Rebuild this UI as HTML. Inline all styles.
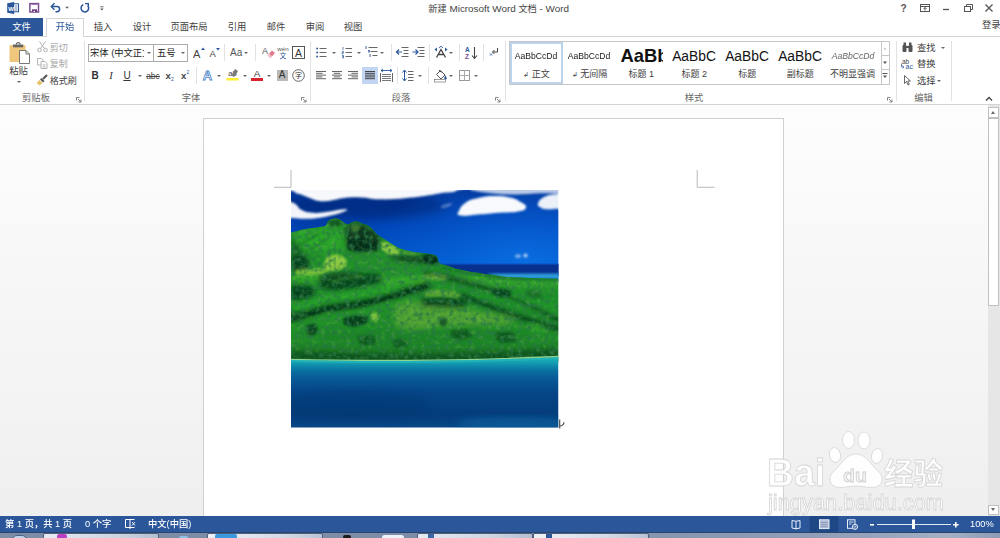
<!DOCTYPE html>
<html lang="zh-CN">
<head>
<meta charset="utf-8">
<title>新建 Microsoft Word 文档 - Word</title>
<style>
html,body{margin:0;padding:0;}
body{width:1000px;height:538px;overflow:hidden;position:relative;background:#fff;
 font-family:"Liberation Sans","Noto Sans CJK SC",sans-serif;font-size:9.300px;color:#404040;}
.a{position:absolute;white-space:nowrap;line-height:1;}
.t{position:absolute;white-space:nowrap;line-height:12px;height:12px;}
.c{text-align:center;}
svg{position:absolute;overflow:visible;}
#titlebar{left:0;top:0;width:1000px;height:18px;background:#fff;}
#tabs{left:0;top:18px;width:1000px;height:18px;background:#fff;}
#ribbon{left:0;top:36px;width:1000px;height:69px;background:#fff;border-top:1px solid #d4d4d4;border-bottom:1px solid #d4d4d4;box-sizing:border-box;}
#rc{left:0;top:0;width:1000px;height:105px;}
#doc{left:0;top:105px;width:1000px;height:411px;background:linear-gradient(to bottom,#fdfdfd 0%,#efefef 100%);}
#page{left:203px;top:117.500px;width:581px;height:398.500px;background:#fff;border:1px solid #d0d0d0;border-bottom:none;box-sizing:border-box;}
#status{left:0;top:516px;width:1000px;height:16px;background:#2b579a;color:#fff;font-weight:500;}
#taskbar{left:0;top:532px;width:1000px;height:6px;background:#7d8da8;overflow:hidden;}
.sep{position:absolute;width:1px;background:#e1e1e1;}
.gl{color:#666;}
.dis{color:#a6a6a6;}
.dd{position:absolute;width:0;height:0;border-left:2px solid transparent;border-right:2px solid transparent;border-top:2.500px solid #666;}
</style>
</head>
<body>
<div class="a" id="titlebar">
<svg style="left:0;top:0" width="120" height="18" viewBox="0 0 120 18">
<rect x="12.500" y="3.800" width="6" height="8" fill="#fff" stroke="#2b579a" stroke-width="1"/>
<path d="M15 6h2.500M15 8h2.500M15 10h2.500" stroke="#2b579a" stroke-width="0.700"/>
<path d="M7.200 3.200l7-1.200v12l-7-1.200z" fill="#2b579a"/>
<text x="8.300" y="10.500" font-size="6" font-weight="bold" fill="#fff" font-family="Liberation Sans, sans-serif">W</text>
<rect x="29.900" y="3.600" width="8.600" height="8.400" fill="#fff" stroke="#7d4c92" stroke-width="1.500"/>
<rect x="31.500" y="3.600" width="5.500" height="1" fill="#7d4c92"/>
<rect x="32" y="9.300" width="5" height="2.700" fill="#6a3a80"/><rect x="33.500" y="10.800" width="1.500" height="1.200" fill="#fff"/>
<path d="M52 6.500h5a2.600 2.600 0 0 1 0 5.200h-1.500" fill="none" stroke="#2b579a" stroke-width="1.500"/><path d="M54.500 3.300l-3.200 3.200 3.200 3.200" fill="none" stroke="#2b579a" stroke-width="1.500"/>
<path d="M65.300 6.800h3.600l-1.800 1.900z" fill="#555"/>
<path d="M83.300 4.600a3.800 3.800 0 1 0 4.600 1.200" fill="none" stroke="#2b579a" stroke-width="1.500"/><path d="M85 3.600h3.300v3.300" fill="none" stroke="#2b579a" stroke-width="1.400"/>
<path d="M100.300 6.800h3.200" stroke="#555" stroke-width="0.900"/><path d="M100.200 8.600h3.400l-1.700 1.900z" fill="#555"/>
</svg>
<div class="t c" style="left:398.700px;top:3px;width:200px;font-size:9.900px;color:#444;"><span style="font-size:9.200px">新建</span> Microsoft Word <span style="font-size:9.200px">文档</span> - Word</div>
<div class="t c" style="left:896.500px;top:3px;width:14px;font-size:10px;font-weight:bold;color:#555;">?</div>
<svg style="left:915px;top:0" width="85" height="18" viewBox="0 0 85 18" fill="none" stroke="#555" stroke-width="1">
<rect x="5.500" y="4.500" width="9" height="7"/><path d="M5.500 6.500h9M10 10.500v-3M8.500 9l1.500-1.500L11.500 9"/>
<path d="M28 9.500h6" stroke-width="1.300"/>
<rect x="49.500" y="6.500" width="6" height="5"/><path d="M51.500 6.500v-2h6v5h-2"/>
<path d="M70.500 4.500l7 7M77.500 4.500l-7 7" stroke-width="1.300"/>
</svg>
</div>
<div class="a" id="tabs">
<div class="a" style="left:0;top:0;width:43px;height:18px;background:#2b579a;"></div>
<div class="t c" style="left:0;top:3px;width:43px;color:#fff;">文件</div>
<div class="a" style="left:46px;top:0;width:38px;height:19px;background:#fff;border:1px solid #d4d4d4;border-bottom:none;box-sizing:border-box;z-index:3;"></div>
<div class="t c" style="left:46px;top:3px;width:38px;color:#2b579a;z-index:4;">开始</div>
<div class="t c" style="left:84px;top:3px;width:38px;">插入</div>
<div class="t c" style="left:123px;top:3px;width:38px;">设计</div>
<div class="t c" style="left:162px;top:3px;width:54px;">页面布局</div>
<div class="t c" style="left:218px;top:3px;width:38px;">引用</div>
<div class="t c" style="left:257px;top:3px;width:38px;">邮件</div>
<div class="t c" style="left:296px;top:3px;width:38px;">审阅</div>
<div class="t c" style="left:334px;top:3px;width:38px;">视图</div>
<div class="t" style="left:982px;top:1px;">登录</div>
</div>
<div class="a" id="ribbon"></div>
<div class="a" id="rc"><svg style="left:8px;top:40px" width="24" height="26" viewBox="0 0 24 26" >
<rect x="1.500" y="5" width="16" height="17" rx="1" fill="#eec67c"/>
<rect x="5" y="4.500" width="10.200" height="2.800" fill="#666"/><path d="M8.300 4.500a1.900 1.900 0 0 1 3.800 0" fill="none" stroke="#666" stroke-width="1.200"/>
<path d="M11.500 10.500h6.500l3.500 3.500v9.500h-10z" fill="#fff" stroke="#777" stroke-width="1"/><path d="M18 10.500v3.500h3.500" fill="none" stroke="#777" stroke-width="1"/>
</svg>
<div class="t c" style="top:65px;left:3.5px;width:30px;">粘贴</div>
<div class="dd" style="left:17px;top:81px;"></div>
<svg style="left:37px;top:41px" width="11" height="12" viewBox="0 0 11 12" fill="none" stroke="#b0b0b0" stroke-width="1"><path d="M2.500 0.500l5 7M8.500 0.500l-5 7"/><circle cx="2.500" cy="9" r="1.800"/><circle cx="8.500" cy="9" r="1.800"/></svg>
<div class="t dis" style="top:41.5px;left:49.8px;font-size:9px;">剪切</div>
<svg style="left:36.5px;top:58px" width="11" height="11" viewBox="0 0 11 11" fill="none" stroke="#b5b5b5" stroke-width="1"><path d="M0.500 0.500h4l1.500 1.500v5h-5.500z" fill="#fff"/><path d="M4 3.500h4l2 2v5h-6z" fill="#fff"/><path d="M5.500 7h3M5.500 9h3" /></svg>
<div class="t dis" style="top:58px;left:49.8px;font-size:9px;">复制</div>
<svg style="left:36px;top:74px" width="12" height="12" viewBox="0 0 12 12" ><path d="M11 1l-4 4" stroke="#555" stroke-width="2.200"/><path d="M5.500 4l3 3-1.500 1.500-3-3z" fill="#555"/><path d="M3.500 6l3 3-3 2.500-3-2.500z" fill="#e9c36e"/></svg>
<div class="t " style="top:74.5px;left:49.8px;font-size:9px;">格式刷</div>
<div class="t gl c" style="top:91.5px;left:16px;width:40px;">剪贴板</div>
<svg style="left:76px;top:96.5px" width="5.5" height="5.5" viewBox="0 0 5.5 5.5" fill="none" stroke="#777" stroke-width="0.900"><path d="M0.500 3.500v-3h3" /><path d="M2 2l3 3M5 2.500v2.500h-2.500" /></svg>
<div class="sep" style="left:84px;top:41px;height:60px;"></div>
<div class="a" style="left:88px;top:44px;width:66px;height:18px;border:1px solid #ababab;box-sizing:border-box;background:#fff;"></div>
<div class="a" style="left:154px;top:44px;width:34px;height:18px;border:1px solid #ababab;border-left:none;box-sizing:border-box;background:#fff;"></div>
<div class="t " style="top:47px;left:90px;width:54px;overflow:hidden;color:#222;">宋体 (中文正文)</div>
<div class="dd" style="left:147px;top:52px;"></div>
<div class="t " style="top:47px;left:157px;color:#222;">五号</div>
<div class="dd" style="left:181px;top:52px;"></div>
<div class="t " style="top:47.5px;left:193px;font-size:11px;color:#444;">A</div>
<svg style="left:200.5px;top:47px" width="4" height="3" viewBox="0 0 4 3" ><path d="M0 3l2-2.500 2 2.500z" fill="#2b579a"/></svg>
<div class="t " style="top:48px;left:209.5px;font-size:9.500px;color:#444;">A</div>
<svg style="left:215.5px;top:47.5px" width="4" height="3" viewBox="0 0 4 3" ><path d="M0 0l2 2.500 2-2.500z" fill="#2b579a"/></svg>
<div class="t " style="top:47px;left:230px;font-size:10px;color:#555;">Aa</div>
<div class="dd" style="left:244px;top:52px;"></div>
<div class="sep" style="left:224px;top:44px;height:17px;"></div>
<div class="sep" style="left:254.5px;top:44px;height:17px;"></div>
<svg style="left:262px;top:46px" width="13" height="13" viewBox="0 0 13 13" ><text x="0" y="8" font-size="9" fill="#555" font-family="Liberation Sans, sans-serif">A</text><path d="M5.500 9.500l4.500-5 3 2.500-4.500 5z" fill="#e07a8a"/><path d="M5.500 9.500l1.500-1.700 3 2.500-1.500 1.700z" fill="#f3c5cc"/></svg>
<div class="t c" style="top:42.5px;left:273px;width:20px;font-size:6.200px;color:#555;">wén</div>
<div class="t c" style="top:49.8px;left:273px;width:20px;font-size:6.800px;color:#2b579a;">文</div>
<svg style="left:291.5px;top:45.5px" width="13" height="13" viewBox="0 0 13 13" ><rect x="0.500" y="0.500" width="12" height="12" fill="#fff" stroke="#555"/><text x="6.500" y="10.500" font-size="10.500" text-anchor="middle" fill="#333" font-family="Liberation Sans, sans-serif">A</text></svg>
<div class="t c" style="top:69.5px;left:89px;width:12px;font-weight:bold;font-size:10px;color:#333;">B</div>
<div class="t c" style="top:69.5px;left:105px;width:12px;font-style:italic;font-size:10.500px;color:#333;font-family:'Liberation Serif',serif;">I</div>
<div class="t c" style="top:69.5px;left:121px;width:12px;text-decoration:underline;font-size:10px;color:#333;">U</div>
<div class="dd" style="left:137.5px;top:75px;"></div>
<div class="t c" style="top:70px;left:144px;width:18px;text-decoration:line-through;font-size:8.500px;color:#444;">abc</div>
<div class="t " style="top:70px;left:165.5px;font-weight:bold;font-size:9.500px;color:#444;">x</div>
<div class="t " style="top:73px;left:171px;font-size:5px;color:#2b579a;">2</div>
<div class="t " style="top:70px;left:181px;font-weight:bold;font-size:9.500px;color:#444;">x</div>
<div class="t " style="top:66px;left:186.5px;font-size:5px;color:#2b579a;">2</div>
<div class="sep" style="left:196px;top:67px;height:17px;"></div>
<svg style="left:201px;top:68px" width="14" height="14" viewBox="0 0 14 14" ><text x="6.500" y="12" font-size="13" font-weight="bold" text-anchor="middle" fill="#fff" stroke="#4a86c8" stroke-width="0.800" font-family="Liberation Sans, sans-serif">A</text></svg>
<div class="dd" style="left:217px;top:75px;"></div>
<div class="t c" style="top:67.5px;left:225.5px;width:14px;font-size:7.500px;color:#444;">ab</div>
<svg style="left:226px;top:68px" width="14" height="14" viewBox="0 0 14 14" ><path d="M9 1l3 2-4 6-2.500-1.500z" fill="#777"/><rect x="0.500" y="10" width="12" height="2.500" fill="#ffee33"/></svg>
<div class="dd" style="left:242.5px;top:75px;"></div>
<div class="t c" style="top:67.5px;left:250px;width:14px;font-size:9.800px;color:#444;">A</div>
<div class="a" style="left:251px;top:78px;width:12px;height:2.700px;background:#d8232a;"></div>
<div class="dd" style="left:267px;top:75px;"></div>
<div class="a" style="left:276.500px;top:69.500px;width:11px;height:11px;background:#b9b9b9;"></div>
<div class="t c" style="top:69.3px;left:275px;width:14px;font-size:10px;color:#333;">A</div>
<svg style="left:291.5px;top:69px" width="13" height="13" viewBox="0 0 13 13" ><circle cx="6.500" cy="6.500" r="5.800" fill="#fff" stroke="#555" stroke-width="0.900"/><text x="6.500" y="8.900" font-size="7" text-anchor="middle" fill="#333" font-family="Liberation Sans, Noto Sans CJK SC, sans-serif">字</text></svg>
<div class="t gl c" style="top:91.5px;left:171px;width:40px;">字体</div>
<svg style="left:300.5px;top:96.5px" width="5.5" height="5.5" viewBox="0 0 5.5 5.5" fill="none" stroke="#777" stroke-width="0.900"><path d="M0.500 3.500v-3h3" /><path d="M2 2l3 3M5 2.500v2.500h-2.500" /></svg>
<div class="sep" style="left:309.5px;top:41px;height:60px;"></div>
<svg style="left:316px;top:46px" width="13" height="13" viewBox="0 0 13 13" ><path d="M3.500 2.500h7M3.500 6.500h7M3.500 10.500h7" stroke="#666" stroke-width="1"/><rect x="0.300" y="1.700" width="1.700" height="1.700" fill="#2b579a"/><rect x="0.300" y="5.700" width="1.700" height="1.700" fill="#2b579a"/><rect x="0.300" y="9.700" width="1.700" height="1.700" fill="#2b579a"/></svg>
<div class="dd" style="left:332px;top:52px;"></div>
<svg style="left:342px;top:46px" width="13" height="13" viewBox="0 0 13 13" ><path d="M3.500 2.500h6.500M3.500 6.500h6.500M3.500 10.500h6.500" stroke="#666" stroke-width="1"/><path d="M1 1v3M0 5.500h1.500v1.200h-1.500v1.200h1.500M0 9.500h1.500v1.200h-1v0h1v1.200h-1.500" stroke="#2b579a" stroke-width="0.700" fill="none"/></svg>
<div class="dd" style="left:357px;top:52px;"></div>
<svg style="left:365px;top:46px" width="14" height="13" viewBox="0 0 14 13" ><path d="M3.500 1.500h9M5.500 5.500h7M7.500 9.500h5" stroke="#666" stroke-width="1"/><path d="M1 0v3M3 4.500h1.500v1.500h-1.500M5 8v3" stroke="#2b579a" stroke-width="0.900" fill="none"/></svg>
<div class="dd" style="left:379.5px;top:52px;"></div>
<div class="sep" style="left:391px;top:44px;height:17px;"></div>
<svg style="left:396px;top:46px" width="13" height="13" viewBox="0 0 13 13" ><path d="M5.500 1.500h7M7.500 4.500h5M7.500 7.500h5M5.500 10.500h7" stroke="#666" stroke-width="1"/><path d="M0.500 6h5.500M3 3.500l-2.500 2.500 2.500 2.500" stroke="#2b579a" stroke-width="1.200" fill="none"/></svg>
<svg style="left:412px;top:46px" width="13" height="13" viewBox="0 0 13 13" ><path d="M5.500 1.500h7M7.500 4.500h5M7.500 7.500h5M5.500 10.500h7" stroke="#666" stroke-width="1"/><path d="M0.500 6h5.500M3.500 3.500l2.500 2.500-2.500 2.500" stroke="#2b579a" stroke-width="1.200" fill="none"/></svg>
<div class="sep" style="left:429px;top:44px;height:17px;"></div>
<svg style="left:434px;top:46px" width="14" height="13" viewBox="0 0 14 13" ><path d="M2.500 11.500l4.500-8 4.500 8M4.500 8.500h5" stroke="#444" stroke-width="1.300" fill="none"/><path d="M0.500 3.500l2.500-2 0 4zM13.500 3.500l-2.500-2 0 4z" fill="#2b579a"/><path d="M5 2l2 -1.800 2 1.800" stroke="#2b579a" stroke-width="0.900" fill="none"/></svg>
<div class="dd" style="left:449px;top:52px;"></div>
<div class="sep" style="left:459px;top:44px;height:17px;"></div>
<svg style="left:465px;top:45.5px" width="14" height="14" viewBox="0 0 14 14" ><text x="0" y="6" font-size="6.500" font-weight="bold" fill="#2b579a" font-family="Liberation Sans, sans-serif">A</text><text x="0" y="13" font-size="6.500" font-weight="bold" fill="#7d4c92" font-family="Liberation Sans, sans-serif">Z</text><path d="M9.500 1v11M7 9.500l2.500 3 2.500-3" stroke="#444" stroke-width="1.100" fill="none"/></svg>
<div class="sep" style="left:482.5px;top:44px;height:17px;"></div>
<svg style="left:489px;top:47px" width="10" height="10" viewBox="0 0 10 10" ><path d="M8.500 1v4h-5M5.500 3l-2 2 2 2" stroke="#444" stroke-width="1" fill="none"/><path d="M1 6.500l2 2M3 6.500l-2 2" stroke="#2b579a" stroke-width="0.800"/></svg>
<svg style="left:316px;top:70px" width="12" height="12" viewBox="0 0 12 12" ><path d="M0 1.5h10M0 3.3h6.5M0 5.1h10M0 6.9h6.5M0 8.7h10" stroke="#666" stroke-width="1" fill="none"/></svg>
<svg style="left:332px;top:70px" width="12" height="12" viewBox="0 0 12 12" ><path d="M0 1.5h10M1.8 3.3h6.5M0 5.1h10M1.8 6.9h6.5M0 8.7h10" stroke="#666" stroke-width="1" fill="none"/></svg>
<svg style="left:348px;top:70px" width="12" height="12" viewBox="0 0 12 12" ><path d="M0 1.5h10M3.5 3.3h6.5M0 5.1h10M3.5 6.9h6.5M0 8.7h10" stroke="#666" stroke-width="1" fill="none"/></svg>
<div class="a" style="left:361.8px;top:67px;width:16px;height:17px;background:#c2d5f2;"></div>
<svg style="left:364.8px;top:70px" width="12" height="12" viewBox="0 0 12 12" ><path d="M0 1.5h10M0 3.3h10M0 5.1h10M0 6.9h10M0 8.7h10" stroke="#444" stroke-width="1" fill="none"/></svg>
<svg style="left:380px;top:69px" width="13" height="13" viewBox="0 0 13 13" ><path d="M0.500 4v9M12.500 4v9" stroke="#666"/><path d="M2 5.500h9M2 7.500h9M2 9.500h9M2 11.500h9" stroke="#777" stroke-width="1.200"/><path d="M1 1.500h11M3 0l-2 1.500 2 1.500M10 0l2 1.500-2 1.500" stroke="#2b579a" stroke-width="0.900" fill="none"/></svg>
<div class="sep" style="left:397px;top:67px;height:17px;"></div>
<svg style="left:402px;top:69px" width="14" height="13" viewBox="0 0 14 13" ><path d="M6 2.500h5.500M6 5.500h5.500M6 8.500h5.500M6 11.500h5.500" stroke="#666" stroke-width="1"/><path d="M2.500 1v11M0.500 3.500l2-2.500 2 2.500M0.500 9.500l2 2.500 2-2.500" stroke="#2b579a" stroke-width="1" fill="none"/></svg>
<div class="dd" style="left:418px;top:75px;"></div>
<div class="sep" style="left:428px;top:67px;height:17px;"></div>
<svg style="left:433px;top:68px" width="15" height="15" viewBox="0 0 15 15" ><path d="M3.500 6.500l4-4 4.500 4.500-4 4z" fill="#fff" stroke="#555" stroke-width="1"/><path d="M6 2l2.500 2.500" stroke="#555"/><path d="M12 7c1 1.500 1.800 2.500 1.800 3.300a1.300 1.300 0 0 1-2.600 0c0-.8.800-1.800.8-3.300z" fill="#2b579a"/><rect x="1.500" y="11.500" width="11" height="2.500" fill="#fff" stroke="#888" stroke-width="0.800"/></svg>
<div class="dd" style="left:449px;top:75px;"></div>
<svg style="left:458.5px;top:69.5px" width="11" height="11" viewBox="0 0 11 11" ><rect x="0.500" y="0.500" width="10" height="10" fill="none" stroke="#999"/><path d="M5.500 0.500v10M0.500 5.500h10" stroke="#aaa"/></svg>
<div class="dd" style="left:473.5px;top:75px;"></div>
<div class="t gl c" style="top:91.5px;left:381px;width:40px;">段落</div>
<svg style="left:495px;top:96.5px" width="5.5" height="5.5" viewBox="0 0 5.5 5.5" fill="none" stroke="#777" stroke-width="0.900"><path d="M0.500 3.500v-3h3" /><path d="M2 2l3 3M5 2.500v2.500h-2.500" /></svg>
<div class="sep" style="left:504.5px;top:41px;height:60px;"></div>
<div class="a" style="left:509px;top:41px;width:381px;height:44px;border:1px solid #c6c6c6;box-sizing:border-box;background:#fff;"></div>
<div class="a" style="left:510px;top:42px;width:53px;height:42px;border:2px solid #bcd3ee;box-sizing:border-box;background:#fff;"></div>
<div class="t c" style="top:50.3px;left:510.3px;width:52px;font-size:9.600px;color:#222;transform:scaleX(0.900);font-family:'Liberation Sans',sans-serif;">AaBbCcDd</div>
<div class="t c" style="top:50.3px;left:563px;width:52px;font-size:9.600px;color:#222;transform:scaleX(0.900);font-family:'Liberation Sans',sans-serif;">AaBbCcDd</div>
<div class="t " style="top:49px;left:620.5px;font-size:18.400px;font-weight:bold;color:#111;width:42.500px;overflow:hidden;line-height:22px;height:22px;top:44.800px;font-family:'Liberation Sans',sans-serif;">AaBb</div>
<div class="t c" style="top:50.5px;left:668px;width:52px;font-size:13.800px;color:#111;line-height:16px;height:16px;top:49.300px;font-family:'Liberation Sans',sans-serif;">AaBbC</div>
<div class="t c" style="top:50.5px;left:721px;width:52px;font-size:13.800px;color:#111;line-height:16px;height:16px;top:49.300px;font-family:'Liberation Sans',sans-serif;">AaBbC</div>
<div class="t c" style="top:50.5px;left:774px;width:52px;font-size:13.800px;color:#111;line-height:16px;height:16px;top:49.300px;font-family:'Liberation Sans',sans-serif;">AaBbC</div>
<div class="t c" style="top:50.3px;left:826.5px;width:52px;font-size:9.600px;font-style:italic;color:#666;transform:scaleX(0.900);font-family:'Liberation Sans',sans-serif;">AaBbCcDd</div>
<div class="t c" style="top:68px;left:510.5px;width:52px;font-size:9px;"><span style="font-size:7px">↲</span> 正文</div>
<div class="t c" style="top:68px;left:563.5px;width:52px;font-size:9px;"><span style="font-size:7px">↲</span> 无间隔</div>
<div class="t c" style="top:68px;left:615.3px;width:52px;font-size:9px;">标题 1</div>
<div class="t c" style="top:68px;left:668.3px;width:52px;font-size:9px;">标题 2</div>
<div class="t c" style="top:68px;left:721.3px;width:52px;font-size:9px;">标题</div>
<div class="t c" style="top:68px;left:774.3px;width:52px;font-size:9px;">副标题</div>
<div class="t c" style="top:68px;left:824.5px;width:56px;font-size:9px;">不明显强调</div>
<div class="a" style="left:880.500px;top:41px;width:9.500px;height:44px;border:1px solid #c6c6c6;box-sizing:border-box;background:#fff;"></div>
<div class="a" style="left:880.500px;top:55px;width:9.500px;height:1px;background:#c6c6c6;"></div>
<div class="a" style="left:880.500px;top:69px;width:9.500px;height:1px;background:#c6c6c6;"></div>
<svg style="left:880.3px;top:41px" width="10" height="44" viewBox="0 0 10 44" ><path d="M3.500 8.500l1.500-2 1.500 2z" fill="#bbb"/><path d="M3 20.500l2 2.500 2-2.500z" fill="#555"/><path d="M2.500 32.500h5" stroke="#555"/><path d="M3 34.500l2 2.500 2-2.500z" fill="#555"/></svg>
<div class="t gl c" style="top:91.5px;left:674px;width:40px;">样式</div>
<svg style="left:887px;top:96.5px" width="5.5" height="5.5" viewBox="0 0 5.5 5.5" fill="none" stroke="#777" stroke-width="0.900"><path d="M0.500 3.500v-3h3" /><path d="M2 2l3 3M5 2.500v2.500h-2.500" /></svg>
<div class="sep" style="left:896px;top:41px;height:60px;"></div>
<svg style="left:902px;top:42px" width="11" height="11" viewBox="0 0 11 11" ><rect x="0.500" y="3" width="4" height="7" rx="1" fill="#555"/><rect x="6.500" y="3" width="4" height="7" rx="1" fill="#555"/><rect x="1.500" y="0.500" width="2.500" height="3" fill="#555"/><rect x="7" y="0.500" width="2.500" height="3" fill="#555"/><rect x="4" y="4" width="3" height="2" fill="#555"/></svg>
<div class="t " style="top:41.5px;left:917px;">查找</div>
<div class="dd" style="left:940.5px;top:46.5px;"></div>
<div class="t " style="top:55.5px;left:902px;font-size:6.500px;color:#444;">ab</div>
<div class="t " style="top:61px;left:905.5px;font-size:7px;color:#2b579a;">ac</div>
<svg style="left:901px;top:63px" width="5" height="6" viewBox="0 0 5 6" ><path d="M0.500 0.500v3.500h2M1.500 2.500l1.500 1.500-1.500 1.500" stroke="#2b579a" stroke-width="0.700" fill="none"/></svg>
<div class="t " style="top:58px;left:917px;">替换</div>
<svg style="left:904px;top:75px" width="8" height="11" viewBox="0 0 8 11" ><path d="M0.500 0.500v8l2-2 1.500 3.500 1.300-.6-1.500-3.400h2.700z" fill="#fff" stroke="#555" stroke-width="0.900"/></svg>
<div class="t " style="top:74.5px;left:917px;">选择</div>
<div class="dd" style="left:936.5px;top:79.5px;"></div>
<div class="t gl c" style="top:91.5px;left:903.5px;width:40px;">编辑</div>
<div class="sep" style="left:951px;top:41px;height:60px;"></div>
<svg style="left:985.3px;top:95.7px" width="8" height="6" viewBox="0 0 8 6" ><path d="M1 4.500l3-3 3 3" stroke="#444" stroke-width="1.400" fill="none"/></svg></div>
<div class="a" id="doc"></div>
<div class="a" id="page"></div>
<svg style="left:291px;top:190px" width="267.500" height="237.500" viewBox="0 0 267.500 237.500">
<defs>
<linearGradient id="sky" x1="0" y1="0" x2="0" y2="1"><stop offset="0" stop-color="#04389c"/><stop offset="0.400" stop-color="#0046b8"/><stop offset="1" stop-color="#0062d6"/></linearGradient>
<linearGradient id="sea" gradientUnits="userSpaceOnUse" x1="0" y1="167" x2="0" y2="237.500"><stop offset="0" stop-color="#19b0b4"/><stop offset="0.070" stop-color="#14a2b2"/><stop offset="0.130" stop-color="#0e88aa"/><stop offset="0.200" stop-color="#0a6ea0"/><stop offset="0.300" stop-color="#085a96"/><stop offset="0.500" stop-color="#064688"/><stop offset="0.820" stop-color="#053c7a"/><stop offset="1" stop-color="#084886"/></linearGradient>
<radialGradient id="skyr" gradientUnits="userSpaceOnUse" cx="235" cy="70" r="170" gradientTransform="translate(0 35) scale(1 0.500)"><stop offset="0" stop-color="#0c74e8" stop-opacity="0.750"/><stop offset="0.450" stop-color="#0a6ae0" stop-opacity="0.450"/><stop offset="1" stop-color="#0a60d8" stop-opacity="0"/></radialGradient>
<linearGradient id="mg" x1="0" y1="0" x2="0" y2="1"><stop offset="0" stop-color="#249228"/><stop offset="0.400" stop-color="#1e9028"/><stop offset="0.850" stop-color="#1f8c26"/><stop offset="1" stop-color="#176a22"/></linearGradient>
<filter id="b1" x="-20%" y="-20%" width="140%" height="140%"><feGaussianBlur stdDeviation="1.200"/></filter>
<filter id="b2" x="-20%" y="-20%" width="140%" height="140%"><feGaussianBlur stdDeviation="2.500"/></filter>
<filter id="b4" x="-20%" y="-20%" width="140%" height="140%"><feGaussianBlur stdDeviation="4.500"/></filter>
<filter id="tex" x="0" y="0" width="100%" height="100%"><feTurbulence type="fractalNoise" baseFrequency="0.220" numOctaves="2" seed="7" result="n"/><feColorMatrix in="n" type="matrix" values="0 0 0 0 0.020  0 0 0 0 0.180  0 0 0 0 0.060  0 2.200 0 0 -0.950"/></filter>
<filter id="tex2" x="0" y="0" width="100%" height="100%"><feTurbulence type="fractalNoise" baseFrequency="0.200" numOctaves="2" seed="23" result="n"/><feColorMatrix in="n" type="matrix" values="0 0 0 0 0.550  0 0 0 0 0.850  0 0 0 0 0.200  0 1.800 0 0 -0.950"/></filter>
<clipPath id="cm"><path d="M0 42.7 L8 40.5 L16 38.7 L26 37.5 L34.7 36 L36.5 32 L39 29.5 L44 28.3 L48 29 L50.7 30.7 L54 33.5 L57.4 34.5 L60.5 32.5 L64 31.3 L68 32 L70.8 33.4 L76 35 L80 37.4 L83 41 L85.4 44 L90 47 L96 50.7 L101 54 L106.8 57.4 L114 60 L122.8 62 L131 63 L138.9 64 L144 65 L146.5 67 L147.4 72 L150 74 L157.5 76 L164 78.5 L171 80 L179 81.8 L187 82.8 L195 84.2 L203 85 L213.6 86.8 L240 88 L267.5 88.8 L267.5 172 L0 172Z"/></clipPath>
<clipPath id="ca"><rect x="0" y="0" width="267.500" height="237.500"/></clipPath>
</defs>
<g clip-path="url(#ca)">
<rect width="267.500" height="92" fill="url(#sky)"/>
<!-- sky tone variation -->
<ellipse cx="70" cy="16" rx="85" ry="13" fill="#062a80" opacity="0.800" filter="url(#b4)"/>
<ellipse cx="40" cy="36" rx="40" ry="8" fill="#04389c" opacity="0.500" filter="url(#b4)"/>
<rect width="267.500" height="92" fill="url(#skyr)"/>
<!-- clouds -->
<g filter="url(#b1)" fill="#fff">
<path d="M4.0 -6.0C-36.5 -4.0 2.3 -0.6 4.0 2.1C5.7 4.8 7.0 3.3 10.7 4.8C14.4 6.3 14.7 6.5 18.7 8.0C22.7 9.5 22.7 9.9 26.7 10.7C30.7 11.5 30.7 11.4 34.7 11.2C38.7 11.0 38.0 10.9 42.7 10.1C47.4 9.3 46.7 8.7 53.4 8.0C60.1 7.3 60.7 7.2 69.4 7.5C78.1 7.8 78.6 9.0 88.0 9.3C97.4 9.6 98.8 9.3 106.8 8.8C114.8 8.3 113.3 8.2 120.0 7.5C126.7 6.8 126.1 7.0 133.5 5.9C140.9 4.8 141.5 4.5 149.5 3.2C157.5 1.9 161.4 3.1 165.5 0.8C169.6 -1.5 206.4 -4.3 166.0 -6.0C125.6 -7.7 44.5 -8.0 4.0 -6.0Z" opacity="0.970"/>
<path d="M-4.0 12.0C-3.0 8.0 -2.3 11.3 0.0 12.0C2.3 12.7 2.6 12.7 5.3 14.7C8.0 16.7 6.7 18.0 10.7 20.0C14.7 22.0 15.4 22.2 21.4 22.7C27.4 23.2 26.7 22.8 34.7 21.9C42.7 21.0 48.7 19.3 53.4 19.2C58.1 19.1 56.8 19.8 53.4 21.4C50.0 23.0 46.7 23.7 40.0 25.4C33.3 27.1 33.4 27.1 26.7 28.0C20.0 28.9 20.1 28.8 13.4 28.8C6.7 28.8 4.4 28.2 0.0 28.0C-4.4 27.8 -3.0 32.0 -4.0 28.0C-5.0 24.0 -5.0 16.0 -4.0 12.0Z" opacity="0.950"/>
<path d="M167.0 22.7C168.7 19.9 168.6 17.1 173.6 13.4C178.6 9.7 179.6 9.9 187.0 8.0C194.4 6.1 195.0 6.0 203.0 5.9C211.0 5.8 212.3 6.0 219.0 7.5C225.7 9.0 225.6 9.5 229.6 12.0C233.6 14.5 235.7 15.0 235.0 17.4C234.3 19.8 233.7 20.1 227.0 21.4C220.3 22.7 218.3 21.9 208.3 22.7C198.3 23.5 195.7 23.8 187.0 24.6C178.3 25.4 178.6 25.9 173.6 25.9C168.6 25.9 168.7 25.3 167.0 24.5C165.3 23.7 165.3 25.5 167.0 22.7Z" opacity="0.970"/>
<path d="M247.0 13.4C248.0 10.7 248.7 9.1 253.7 6.7C258.7 4.3 262.4 4.7 267.0 4.0C271.6 3.3 270.7 0.3 272.0 4.0C273.3 7.7 273.3 15.0 272.0 18.7C270.7 22.4 270.9 18.6 267.0 18.7C263.1 18.8 260.6 19.5 256.3 19.2C252.0 18.9 252.0 18.9 249.7 17.4C247.4 15.9 246.0 16.1 247.0 13.4Z" opacity="0.920"/>
<path d="M179 -6h92v10c-14-1.500-26-.5-40 .3-18 .7-36-.8-52-4.300z" opacity="0.720"/>
<path d="M150 16c4-2 8-3 12-3-2 3-6 5-12 5z" opacity="0.300"/>
<ellipse cx="227" cy="66" rx="3" ry="1.800" opacity="0.500"/><ellipse cx="234.500" cy="65.500" rx="2.200" ry="2" opacity="0.650"/>
</g>
<!-- far sea -->
<rect x="145" y="74.200" width="123" height="12" fill="#08308e"/>
<rect x="145" y="73.500" width="123" height="1.500" fill="#0a48b8" opacity="0.700"/>
<path d="M196 83.500h72v5h-58z" fill="#2f9ad8" filter="url(#b1)"/>
<!-- mountain -->
<path d="M0 42.7 L8 40.5 L16 38.7 L26 37.5 L34.7 36 L36.5 32 L39 29.5 L44 28.3 L48 29 L50.7 30.7 L54 33.5 L57.4 34.5 L60.5 32.5 L64 31.3 L68 32 L70.8 33.4 L76 35 L80 37.4 L83 41 L85.4 44 L90 47 L96 50.7 L101 54 L106.8 57.4 L114 60 L122.8 62 L131 63 L138.9 64 L144 65 L146.5 67 L147.4 72 L150 74 L157.5 76 L164 78.5 L171 80 L179 81.8 L187 82.8 L195 84.2 L203 85 L213.6 86.8 L240 88 L267.5 88.8 L267.5 172 L0 172Z" fill="url(#mg)"/>
<g clip-path="url(#cm)">
<g filter="url(#b2)">
<path d="M3 41 L20 38.5 L35 37 L46 40 L54 48 L50 60 L34 63 L14 60 L4 52Z" fill="#2aaa28" opacity="0.8"/>
<path d="M54 38 L60 33.5 L67 32.5 L76 36 L84 41 L89 48 L88 59 L78 62 L62 61.5 L55 54Z" fill="#07331a" opacity="0.95"/>
<path d="M98 63.5 L110 66 L122 66.5 L134 66 L146 67.5 L147.5 73.5 L134 73 L116 72.5 L100 70Z" fill="#07331a" opacity="0.95"/>
<path d="M0 48 L6 52 L12 62 L18 70 L16 80 L6 82 L0 82Z" fill="#105220" opacity="0.75"/>
<path d="M58 63 L80 62.5 L98 66 L112 72 L126 75 L126 81 L100 82 L76 80 L60 74Z" fill="#218f2a" opacity="0.7"/>
<path d="M0 84 L30 82 L60 84 L88 86 L60 90 L30 91 L0 92Z" fill="#40b82a" opacity="0.6"/>
<path d="M28 84 L50 82 L70 83 L90 84 L92 92 L70 98 L46 101 L28 98Z" fill="#07331a" opacity="0.8"/>
<path d="M90 87.5 L110 86.5 L134 86 L150 88 L134 93 L110 95 L92 95Z" fill="#40b82a" opacity="0.65"/>
<path d="M160 84 L190 86 L230 90 L267.5 90.5 L267.5 97 L230 97 L196 95 L164 90Z" fill="#38a82c" opacity="0.8"/>
<path d="M0 95 L10 94.5 L22 97 L25 104 L16 110 L0 111Z" fill="#07331a" opacity="0.85"/>
<path d="M6 117 L34 110 L66 104 L104 98.5" fill="none" stroke="#2aaa28" stroke-width="8" stroke-linecap="round" stroke-linejoin="round" opacity="0.75"/>
<path d="M136 95 L110 103.5 L71.4 113.5 L34 118.3 L0 128.5" fill="none" stroke="#07331a" stroke-width="8" stroke-linecap="round" stroke-linejoin="round" opacity="0.9"/>
<path d="M0 138 L30 129 L60 124 L96 114 L120 108" fill="none" stroke="#259a28" stroke-width="7" stroke-linecap="round" stroke-linejoin="round" opacity="0.6"/>
<path d="M104 116 L120 112 L134 113 L150 117 L180 120 L223 128 L222 134 L190 135 L150 136 L120 140 L104 136Z" fill="#5fa834" opacity="0.75"/>
<path d="M130 108 L150 107 L168 108.5 L178 113 L170 118 L150 117.5 L132 117Z" fill="#07331a" opacity="0.85"/>
<path d="M134 84 L162 88.5 L190 96.5 L218 106.5 L245.6 118.6 L267.5 130" fill="none" stroke="#07331a" stroke-width="4.5" stroke-linecap="round" stroke-linejoin="round" opacity="0.8"/>
<path d="M171 105.4 L201 117.3 L230.7 127.7 L267.5 139" fill="none" stroke="#07331a" stroke-width="4.5" stroke-linecap="round" stroke-linejoin="round" opacity="0.8"/>
<path d="M180 100 L220 104 L267.5 112 L267.5 128 L240 118 L205 108 L182 104Z" fill="#209a2a" opacity="0.6"/>
<path d="M0 161 L60 163 L130 164 L200 162 L267.5 158 L267.5 172 L0 172Z" fill="#07331a" opacity="0.5"/>
<path d="M30 142 L80 140 L130 142 L180 140 L240 142 L240 152 L180 152 L130 154 L80 152 L30 152Z" fill="#1c7c26" opacity="0.5"/>
</g>
<g filter="url(#b1)">
<path d="M35.5 32 L39 29.5 L44 28.5 L49 29.8 L51.6 33 L48 36.5 L40 36.5Z" fill="#105220" opacity="0.85"/>
<path d="M56 50 L70 48 L86 51 L86.5 60.5 L70 61.5 L57 60Z" fill="#062c16" opacity="0.8"/>
<path d="M60 36 L66 34 L70 37 L66 42 L61 42Z" fill="#5fa834" opacity="0.55"/>
<path d="M90 52.5 L96 52 L103 56 L109 61 L108 65 L98 64.5 L91 60Z" fill="#8ecb42" opacity="0.9"/>
<path d="M112 61 L122 62.5 L130 64 L122 65.5 L112 64Z" fill="#5fa834" opacity="0.7"/>
<path d="M1.5 67 L12 66 L18 72 L16 80 L4 81 L1 76Z" fill="#07331a" opacity="0.7"/>
<path d="M6 58 L16 50 L28 44" fill="none" stroke="#105220" stroke-width="1.6" stroke-linecap="round" stroke-linejoin="round" opacity="0.55"/>
<path d="M16 62 L28 54 L38 46" fill="none" stroke="#105220" stroke-width="1.4" stroke-linecap="round" stroke-linejoin="round" opacity="0.45"/>
<path d="M36 66 L44 64.5 L52 66 L56 71 L55 77 L48 80.5 L38 81 L32 76Z" fill="#8ecb42" opacity="0.95"/>
<path d="M5 80 L20 78.5 L33 78 L40 81 L30 84.5 L14 85.5 L5 85Z" fill="#8ecb42" opacity="0.75"/>
<path d="M40 92 L56 88 L72 86" fill="none" stroke="#40b82a" stroke-width="1.6" stroke-linecap="round" stroke-linejoin="round" opacity="0.5"/>
<path d="M134 83.5 L146 83 L156 86 L155 90.5 L144 90 L134 88.5Z" fill="#8ecb42" opacity="0.6"/>
<path d="M150 77.5 L170 81.5 L196 85.5 L230 88.8 L267.5 89.8" fill="none" stroke="#105220" stroke-width="1.8" stroke-linecap="round" stroke-linejoin="round" opacity="0.55"/>
<path d="M134 96.5 L110 104.5 L72 114.8 L34 119.3 L0 129.5" fill="none" stroke="#062c16" stroke-width="3.5" stroke-linecap="round" stroke-linejoin="round" opacity="0.7"/>
<path d="M52 128 L64 125.5 L77 126.5 L76 133 L64 137 L53 135Z" fill="#07331a" opacity="0.85"/>
<path d="M15 135 L24 133.5 L27 139 L24 145.5 L16 145Z" fill="#07331a" opacity="0.75"/>
<path d="M0 122 L10 121 L16 125 L8 130 L0 131Z" fill="#105220" opacity="0.6"/>
<path d="M80 123.5 L86 122.5 L89 127 L85 132 L80 130Z" fill="#8ecb42" opacity="0.8"/>
<path d="M149 127.5 L155 127.5 L156.5 133 L152 137 L148.5 134Z" fill="#07331a" opacity="0.7"/>
<path d="M134 101 L146 99.5 L160 100.5 L171 105 L166 108 L150 106.5 L134 107.5Z" fill="#5fa834" opacity="0.85"/>
<path d="M134 84 L162 88.5 L190 96.5 L218 106.5 L245.6 118.6 L267.5 130" fill="none" stroke="#07331a" stroke-width="1.8" stroke-linecap="round" stroke-linejoin="round" opacity="0.5"/>
<path d="M171 105.4 L201 117.3 L230.7 127.7 L267.5 139" fill="none" stroke="#07331a" stroke-width="1.8" stroke-linecap="round" stroke-linejoin="round" opacity="0.5"/>
<path d="M133 64.5 L140 64 L146 66.5 L147.5 73.5 L140 74 L133 72Z" fill="#062c16" opacity="0.85"/>
<path d="M201 99 L212 98.5 L220.5 101 L219 107 L208 107.5 L201 104Z" fill="#07331a" opacity="0.7"/>
<path d="M236 100 L248 101 L252 107 L242 109 L235 105Z" fill="#105220" opacity="0.5"/>
<path d="M160 140 L176 139 L182 146 L170 150 L160 147Z" fill="#07331a" opacity="0.5"/>
<path d="M205 142 L222 142 L226 152 L210 153 L204 148Z" fill="#07331a" opacity="0.5"/>
<path d="M66 146 L82 145 L86 154 L70 156Z" fill="#07331a" opacity="0.5"/>
<path d="M100 150 L112 148 L118 156 L104 158Z" fill="#07331a" opacity="0.45"/>
<path d="M236 132 L252 134 L256 142 L240 142Z" fill="#40b82a" opacity="0.4"/>
</g>
<rect x="0" y="28" width="267.500" height="145" filter="url(#tex)"/>
<rect x="0" y="28" width="267.500" height="145" filter="url(#tex2)" opacity="0.280"/>
</g>
<!-- water -->
<path d="M0 169.800C45 170.800 95 171 140 170.600S230 168.500 267.500 167v71h-267.500z" fill="url(#sea)"/>
<ellipse cx="225" cy="234" rx="60" ry="7" fill="#0f68a4" opacity="0.600" filter="url(#b4)"/>
<ellipse cx="60" cy="215" rx="80" ry="14" fill="#04376f" opacity="0.450" filter="url(#b4)"/>
<path d="M0 169.300C45 170.300 95 170.500 140 170.100S230 168 267.500 166.500" fill="none" stroke="#9ade9c" stroke-width="1.300" opacity="0.900"/>
<path d="M0 171C45 172 95 172.200 140 171.800S230 169.700 267.500 168.200" fill="none" stroke="#25b8b8" stroke-width="2" opacity="0.700"/>
</g>
</svg>
<svg style="left:0;top:0" width="1000" height="538" viewBox="0 0 1000 538" fill="none">
<path d="M274 187.300h17v-17.300M714.500 187.300h-17.300v-17.300" stroke="#b8b8b8" stroke-width="1"/>
<path d="M559.700 419.500v9M560 426c2.200-.3 3.800-1.500 4-3.800" stroke="#444" stroke-width="1.100"/>
</svg>
<div class="a" style="left:988px;top:105px;width:12px;height:411px;background:#e6e6e6;"></div>
<div class="a" style="left:988px;top:106.500px;width:10.800px;height:11px;background:#fff;border:1px solid #c0c0c0;box-sizing:border-box;"></div>
<div class="a" style="left:991px;top:111px;width:0;height:0;border-left:2.500px solid transparent;border-right:2.500px solid transparent;border-bottom:3px solid #666;"></div>
<div class="a" style="left:988px;top:118px;width:10.800px;height:188px;background:#fff;border:1px solid #c0c0c0;box-sizing:border-box;"></div>
<div class="a" style="left:988px;top:504.500px;width:10.800px;height:10px;background:#fff;border:1px solid #c0c0c0;box-sizing:border-box;"></div>
<div class="a" style="left:991px;top:508px;width:0;height:0;border-left:2.500px solid transparent;border-right:2.500px solid transparent;border-top:3px solid #666;"></div>

<svg style="left:760px;top:425px" width="200" height="92" viewBox="760 425 200 92" font-family="Liberation Sans, Noto Sans CJK SC, sans-serif">
<g fill="#fff" fill-opacity="0.900" stroke="#d4d4d4" stroke-width="0.800">
<text x="767" y="486" font-size="39" font-weight="bold" textLength="58" lengthAdjust="spacingAndGlyphs">Bai</text>
<path d="M856 454c8 0 13 7 17 12 5 5 9 8 9 13 0 6-5 8.500-10 8.500-6 0-10-1.500-16-1.500s-10 1.500-16 1.500c-5 0-10-2.500-10-8.500 0-5 4-8 9-13 4-5 9-12 17-12z"/>
<ellipse cx="835" cy="455" rx="5.500" ry="7.500" transform="rotate(-12 835 455)"/>
<ellipse cx="848.500" cy="440" rx="6" ry="8.500"/>
<ellipse cx="864" cy="440.500" rx="6" ry="8.500"/>
<ellipse cx="877" cy="456" rx="5.500" ry="7.500" transform="rotate(12 877 456)"/>
<text x="884" y="484" font-size="30" font-weight="bold" textLength="59" lengthAdjust="spacingAndGlyphs">经验</text>
<text x="768" y="510" font-size="21.500" textLength="176" lengthAdjust="spacingAndGlyphs">jingyan.baidu.com</text>
</g>
<text x="843" y="482" font-size="19" font-weight="bold" fill="#f2f2f2" stroke="#d0d0d0" stroke-width="0.800" textLength="24" lengthAdjust="spacingAndGlyphs">du</text>
</svg>
<div class="a" id="status">
<div class="t" style="left:5px;top:2px;">第 1 页，共 1 页</div>
<div class="t" style="left:85px;top:2px;">0 个字</div>
<svg style="left:124px;top:2px" width="13" height="13" viewBox="0 0 13 13" fill="none" stroke="#fff" stroke-width="1"><path d="M1.500 1.500h4.500v8h-4.500zM6 1.500h4.500M6 9.500h4.500M6 9.500v1.500"/><path d="M8 4l3 3.500M11 4l-3 3.500" stroke-width="0.900"/></svg>
<div class="t" style="left:148px;top:2px;">中文(中国)</div>
<svg style="left:785px;top:0" width="215" height="16" viewBox="0 0 215 16" fill="none" stroke="#fff" stroke-width="1">
<rect x="24.700" y="0" width="28.600" height="16" fill="#1e4786" stroke="none"/>
<path d="M7 4.500l4 .8 4-.8v7.500l-4 .8-4-.8zM11 5.300v8" stroke="#e8eef8"/>
<rect x="34.500" y="3.800" width="9.500" height="8.800" fill="#aebbd2" stroke="#e8eef8"/>
<path d="M36 6.500h6.500M36 8.500h6.500M36 10.500h6.500" stroke="#8296b8" stroke-width="0.700"/>
<rect x="62.500" y="3.800" width="7.500" height="8.500" stroke="#e8eef8"/><path d="M64 6h4.500M64 8h2.500" stroke-width="0.800"/><circle cx="70" cy="10.800" r="2.600" fill="#2b579a" stroke="#e8eef8"/><path d="M67.500 10.800h5M70 8.300v5" stroke-width="0.500"/>
<path d="M85 8.800h4" stroke-width="1.600"/>
<path d="M92 8.500h74" stroke="#e0e8f4"/>
<rect x="127" y="3.500" width="3" height="9.500" fill="#fff" stroke="none"/>
<path d="M168 8.800h5.600M170.800 6v5.600" stroke-width="1.600"/>
</svg>
<div class="t" style="left:970px;top:2px;">100%</div>
</div>
<div class="a" id="taskbar">
<div class="a" style="left:0;top:0;width:1000px;height:1px;background:#2a446e;"></div>
<div class="a" style="left:12px;top:2.500px;width:15px;height:10px;border-radius:8px;background:#c3d3e8;border:1px solid #4a6288;box-sizing:border-box;"></div>
<div class="a" style="left:43px;top:1px;width:116px;height:8px;background:linear-gradient(to right,#e6ebf3,#cfd7e3 60%,#b4c0d0);border:1px solid #4d607e;border-radius:2px;box-sizing:border-box;"></div>
<div class="a" style="left:57px;top:2px;width:10px;height:5px;background:#b93ec4;border-radius:3px;"></div>
<div class="a" style="left:179px;top:3.500px;width:9px;height:4px;background:#8cc0ea;border-radius:3px;"></div>
<div class="a" style="left:207px;top:1px;width:116px;height:8px;background:linear-gradient(to right,#eef2f7,#d6dde8 60%,#b9c4d3);border:1px solid #4d607e;border-radius:2px;box-sizing:border-box;"></div>
<div class="a" style="left:215px;top:2px;width:22px;height:5px;background:#3b97de;border-radius:2px;"></div>
<div class="a" style="left:343px;top:3px;width:8px;height:4px;background:#1c1c1c;border-radius:3px;"></div>
<div class="a" style="left:382px;top:2.500px;width:22px;height:5px;background:#eef4fa;border-radius:3px;"></div>
<div class="a" style="left:417px;top:1px;width:116px;height:8px;background:linear-gradient(to right,#e6ebf3,#cfd7e3 60%,#b4c0d0);border:1px solid #4d607e;border-radius:2px;box-sizing:border-box;"></div>
<div class="a" style="left:428px;top:2px;width:6px;height:5px;background:#3a66a8;"></div>
<div class="a" style="left:533px;top:1px;width:116px;height:8px;background:linear-gradient(to right,#eef2f7,#d6dde8 60%,#b9c4d3);border:1px solid #4d607e;border-radius:2px;box-sizing:border-box;"></div>
<div class="a" style="left:546px;top:2px;width:6px;height:5px;background:#2b579a;"></div>
<div class="a" style="left:650px;top:1px;width:350px;height:8px;background:linear-gradient(to right,#8595ae,#93a2b9 60%,#a3b0c4 85%,#8d9cb4);"></div>
</div>
</body>
</html>
